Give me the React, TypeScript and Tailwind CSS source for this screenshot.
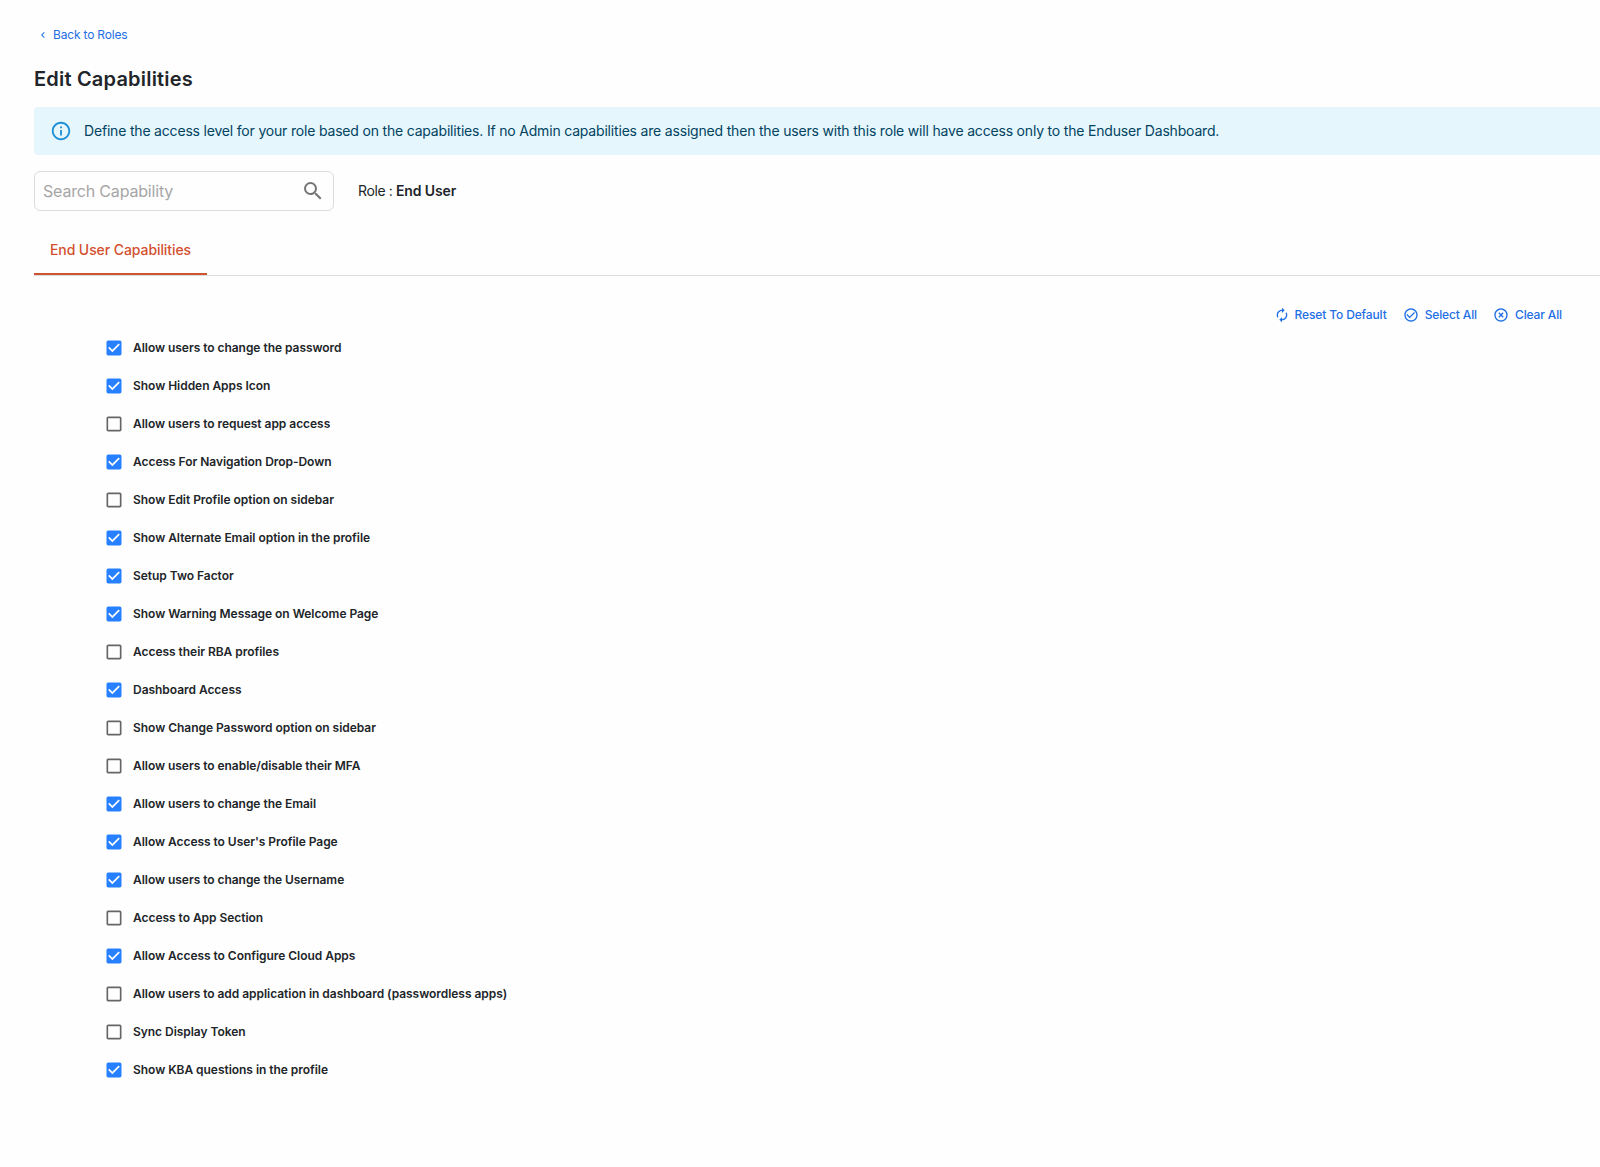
import { useState } from "react";
import type { ReactNode } from "react";
import { MdAutorenew, MdCheckBox, MdCheckBoxOutlineBlank, MdCheckCircleOutline, MdChevronLeft, MdHighlightOff, MdInfoOutline, MdSearch } from "react-icons/md";

type Capability = {
    label: string;
    enabled: boolean;
};

const defaultCapabilities: Capability[] = [
    { label: "Allow users to change the password", enabled: true },
    { label: "Show Hidden Apps Icon", enabled: true },
    { label: "Allow users to request app access", enabled: false },
    { label: "Access For Navigation Drop-Down", enabled: true },
    { label: "Show Edit Profile option on sidebar", enabled: false },
    { label: "Show Alternate Email option in the profile", enabled: true },
    { label: "Setup Two Factor", enabled: true },
    { label: "Show Warning Message on Welcome Page", enabled: true },
    { label: "Access their RBA profiles", enabled: false },
    { label: "Dashboard Access", enabled: true },
    { label: "Show Change Password option on sidebar", enabled: false },
    { label: "Allow users to enable/disable their MFA", enabled: false },
    { label: "Allow users to change the Email", enabled: true },
    { label: "Allow Access to User's Profile Page", enabled: true },
    { label: "Allow users to change the Username", enabled: true },
    { label: "Access to App Section", enabled: false },
    { label: "Allow Access to Configure Cloud Apps", enabled: true },
    { label: "Allow users to add application in dashboard (passwordless apps)", enabled: false },
    { label: "Sync Display Token", enabled: false },
    { label: "Show KBA questions in the profile", enabled: true },
];

function ActionButton({ icon, onClick, children }: { icon: ReactNode; onClick: () => void; children: ReactNode }) {
    return (
        <button type="button" onClick={onClick} className="flex items-center gap-1.5 text-xs font-medium tracking-[-0.13px] whitespace-nowrap text-[#1f6fe5]">
            {icon}
            {children}
        </button>
    );
}

function CapabilityRow({ label, enabled, onToggle }: Capability & { onToggle: () => void }) {
    return (
        <li className="h-[38px]">
            <button type="button" role="checkbox" aria-checked={enabled} onClick={onToggle} className="flex h-full items-center gap-[9px]">
                {enabled ? <MdCheckBox className="size-5 text-[#2680ff]" /> : <MdCheckBoxOutlineBlank className="size-5 text-[#666666]" />}
                <span className="text-xs font-semibold tracking-[-0.04px] whitespace-nowrap">{label}</span>
            </button>
        </li>
    );
}

export default function App() {
    const [capabilities, setCapabilities] = useState(defaultCapabilities);
    const [search, setSearch] = useState("");

    const setAll = (enabled: boolean) => setCapabilities(capabilities.map((c) => ({ ...c, enabled })));
    const toggle = (label: string) =>
        setCapabilities(capabilities.map((c) => (c.label === label ? { ...c, enabled: !c.enabled } : c)));

    const visible = capabilities.filter((c) => c.label.toLowerCase().includes(search.toLowerCase()));

    return (
        <main className="h-[1167px] w-full overflow-hidden bg-[#fefefe] pt-[27px] pl-[34px] font-[Inter,sans-serif] text-[#212529]">
            <a href="#" className="flex h-4 w-fit items-center gap-1 pl-[3px] text-xs tracking-[-0.18px] text-[#1f6fe5]">
                <MdChevronLeft className="size-3" />
                Back to Roles
            </a>
            <h1 className="mt-5 text-xl leading-8 font-semibold tracking-[0.2px]">Edit Capabilities</h1>

            <div className="mt-3 flex h-12 items-center gap-3 rounded-l bg-[#e5f6fd] px-4 text-sm text-[#014361]">
                <MdInfoOutline className="size-[22px] text-[#1f8fd6]" />
                <p className="tracking-[-0.187px] whitespace-nowrap">
                    Define the access level for your role based on the capabilities. If no Admin capabilities are assigned then the users with this role will have access only to the Enduser Dashboard.
                </p>
            </div>

            <div className="mt-4 flex items-center gap-6">
                <label className="flex h-10 w-[300px] items-center rounded-md border border-[#dcdcdc] pr-2 pl-2">
                    <input
                        value={search}
                        onChange={(e) => setSearch(e.target.value)}
                        placeholder="Search Capability"
                        className="min-w-0 flex-1 text-base tracking-[-0.18px] outline-none placeholder:text-[#a6a6a6]"
                    />
                    <MdSearch className="size-6 text-[#757575]" />
                </label>
                <p className="text-sm tracking-[-0.4px]">
                    Role : <b className="font-semibold tracking-[-0.1px]">End User</b>
                </p>
            </div>

            <div className="mt-[15px] flex h-[50px] border-b border-[#dddddd]">
                <button type="button" className="-mb-px h-[49px] w-[173px] border-b-2 border-[#cf5430] text-sm font-medium tracking-[-0.08px] text-[#d2502f]">
                    End User Capabilities
                </button>
            </div>

            <div className="mt-[31px] flex h-4 items-center justify-end gap-4 pr-[38px]">
                <ActionButton icon={<MdAutorenew className="-mr-px size-4" />} onClick={() => setCapabilities(defaultCapabilities)}>
                    Reset To Default
                </ActionButton>
                <ActionButton icon={<MdCheckCircleOutline className="size-4" />} onClick={() => setAll(true)}>
                    Select All
                </ActionButton>
                <ActionButton icon={<MdHighlightOff className="size-4" />} onClick={() => setAll(false)}>
                    Clear All
                </ActionButton>
            </div>

            <ul className="mt-1.5 pl-[70px]">
                {visible.map((c) => (
                    <CapabilityRow key={c.label} {...c} onToggle={() => toggle(c.label)} />
                ))}
            </ul>
        </main>
    );
}
